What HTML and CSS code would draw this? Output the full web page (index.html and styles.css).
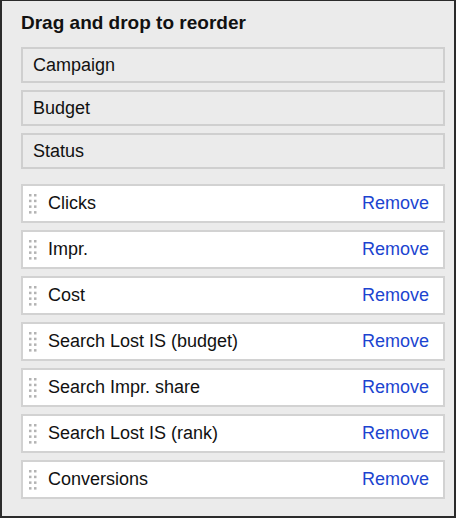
FILE: index.html
```html
<!DOCTYPE html>
<html lang="en">
<head>
  <meta charset="UTF-8">
  <meta name="viewport" content="width=device-width, initial-scale=1.0">
  <title>Reorder columns</title>
  <link rel="stylesheet" href="styles.css">
</head>
<body>
  <div class="panel">
    <h1 class="title">Drag and drop to reorder</h1>

    <ul class="fixed-list">
      <li class="fixed-item">Campaign</li>
      <li class="fixed-item">Budget</li>
      <li class="fixed-item">Status</li>
    </ul>

    <ul class="sort-list">
      <li class="sort-item">
        <svg class="handle" width="8" height="20" viewBox="0 0 8 20"><g fill="#b3b3b3"><rect x="0" y="0" width="2.5" height="2.5"/><rect x="5" y="0" width="2.5" height="2.5"/><rect x="0" y="5.7" width="2.5" height="2.5"/><rect x="5" y="5.7" width="2.5" height="2.5"/><rect x="0" y="11.4" width="2.5" height="2.5"/><rect x="5" y="11.4" width="2.5" height="2.5"/><rect x="0" y="17.1" width="2.5" height="2.5"/><rect x="5" y="17.1" width="2.5" height="2.5"/></g></svg>
        <span class="name">Clicks</span>
        <a href="#" class="remove">Remove</a>
      </li>
      <li class="sort-item">
        <svg class="handle" width="8" height="20" viewBox="0 0 8 20"><g fill="#b3b3b3"><rect x="0" y="0" width="2.5" height="2.5"/><rect x="5" y="0" width="2.5" height="2.5"/><rect x="0" y="5.7" width="2.5" height="2.5"/><rect x="5" y="5.7" width="2.5" height="2.5"/><rect x="0" y="11.4" width="2.5" height="2.5"/><rect x="5" y="11.4" width="2.5" height="2.5"/><rect x="0" y="17.1" width="2.5" height="2.5"/><rect x="5" y="17.1" width="2.5" height="2.5"/></g></svg>
        <span class="name">Impr.</span>
        <a href="#" class="remove">Remove</a>
      </li>
      <li class="sort-item">
        <svg class="handle" width="8" height="20" viewBox="0 0 8 20"><g fill="#b3b3b3"><rect x="0" y="0" width="2.5" height="2.5"/><rect x="5" y="0" width="2.5" height="2.5"/><rect x="0" y="5.7" width="2.5" height="2.5"/><rect x="5" y="5.7" width="2.5" height="2.5"/><rect x="0" y="11.4" width="2.5" height="2.5"/><rect x="5" y="11.4" width="2.5" height="2.5"/><rect x="0" y="17.1" width="2.5" height="2.5"/><rect x="5" y="17.1" width="2.5" height="2.5"/></g></svg>
        <span class="name">Cost</span>
        <a href="#" class="remove">Remove</a>
      </li>
      <li class="sort-item">
        <svg class="handle" width="8" height="20" viewBox="0 0 8 20"><g fill="#b3b3b3"><rect x="0" y="0" width="2.5" height="2.5"/><rect x="5" y="0" width="2.5" height="2.5"/><rect x="0" y="5.7" width="2.5" height="2.5"/><rect x="5" y="5.7" width="2.5" height="2.5"/><rect x="0" y="11.4" width="2.5" height="2.5"/><rect x="5" y="11.4" width="2.5" height="2.5"/><rect x="0" y="17.1" width="2.5" height="2.5"/><rect x="5" y="17.1" width="2.5" height="2.5"/></g></svg>
        <span class="name">Search Lost IS (budget)</span>
        <a href="#" class="remove">Remove</a>
      </li>
      <li class="sort-item">
        <svg class="handle" width="8" height="20" viewBox="0 0 8 20"><g fill="#b3b3b3"><rect x="0" y="0" width="2.5" height="2.5"/><rect x="5" y="0" width="2.5" height="2.5"/><rect x="0" y="5.7" width="2.5" height="2.5"/><rect x="5" y="5.7" width="2.5" height="2.5"/><rect x="0" y="11.4" width="2.5" height="2.5"/><rect x="5" y="11.4" width="2.5" height="2.5"/><rect x="0" y="17.1" width="2.5" height="2.5"/><rect x="5" y="17.1" width="2.5" height="2.5"/></g></svg>
        <span class="name">Search Impr. share</span>
        <a href="#" class="remove">Remove</a>
      </li>
      <li class="sort-item">
        <svg class="handle" width="8" height="20" viewBox="0 0 8 20"><g fill="#b3b3b3"><rect x="0" y="0" width="2.5" height="2.5"/><rect x="5" y="0" width="2.5" height="2.5"/><rect x="0" y="5.7" width="2.5" height="2.5"/><rect x="5" y="5.7" width="2.5" height="2.5"/><rect x="0" y="11.4" width="2.5" height="2.5"/><rect x="5" y="11.4" width="2.5" height="2.5"/><rect x="0" y="17.1" width="2.5" height="2.5"/><rect x="5" y="17.1" width="2.5" height="2.5"/></g></svg>
        <span class="name">Search Lost IS (rank)</span>
        <a href="#" class="remove">Remove</a>
      </li>
      <li class="sort-item">
        <svg class="handle" width="8" height="20" viewBox="0 0 8 20"><g fill="#b3b3b3"><rect x="0" y="0" width="2.5" height="2.5"/><rect x="5" y="0" width="2.5" height="2.5"/><rect x="0" y="5.7" width="2.5" height="2.5"/><rect x="5" y="5.7" width="2.5" height="2.5"/><rect x="0" y="11.4" width="2.5" height="2.5"/><rect x="5" y="11.4" width="2.5" height="2.5"/><rect x="0" y="17.1" width="2.5" height="2.5"/><rect x="5" y="17.1" width="2.5" height="2.5"/></g></svg>
        <span class="name">Conversions</span>
        <a href="#" class="remove">Remove</a>
      </li>
    </ul>
  </div>
</body>
</html>
```

FILE: styles.css
```css
body {
  margin: 0;
  background-color: #fff;
  font-family: "Liberation Sans", Arial, sans-serif;
  color: #111;
}
.panel {
  width: 456px;
  height: 518px;
  box-sizing: border-box;
  background-color: #ebebeb;
  border: 2px solid #2b2b2b;
  border-top-width: 1px;
  padding: 9px 9px 0 19px;
}
.title {
  margin: 0 0 12px 0;
  font-size: 19px;
  line-height: 25px;
  font-weight: bold;
  color: #111;
}
.fixed-list,
.sort-list {
  list-style: none;
  margin: 0;
  padding: 0;
}
.fixed-list {
  margin-bottom: 15px;
}
.fixed-item {
  height: 36px;
  box-sizing: border-box;
  margin-bottom: 7px;
  padding-left: 10px;
  display: flex;
  align-items: center;
  border: 2px solid #cfcfcf;
  background-color: #ebebeb;
  font-size: 18px;
}
.sort-item {
  height: 39px;
  box-sizing: border-box;
  margin-bottom: 7px;
  padding: 0 14px 0 6px;
  display: flex;
  align-items: center;
  border: 2px solid #d2d2d2;
  background-color: #fff;
  font-size: 18px;
}
.handle {
  flex: none;
  margin-right: 11px;
}
.name {
  flex: 1;
}
.remove {
  color: #1c44d0;
  text-decoration: none;
}
```
